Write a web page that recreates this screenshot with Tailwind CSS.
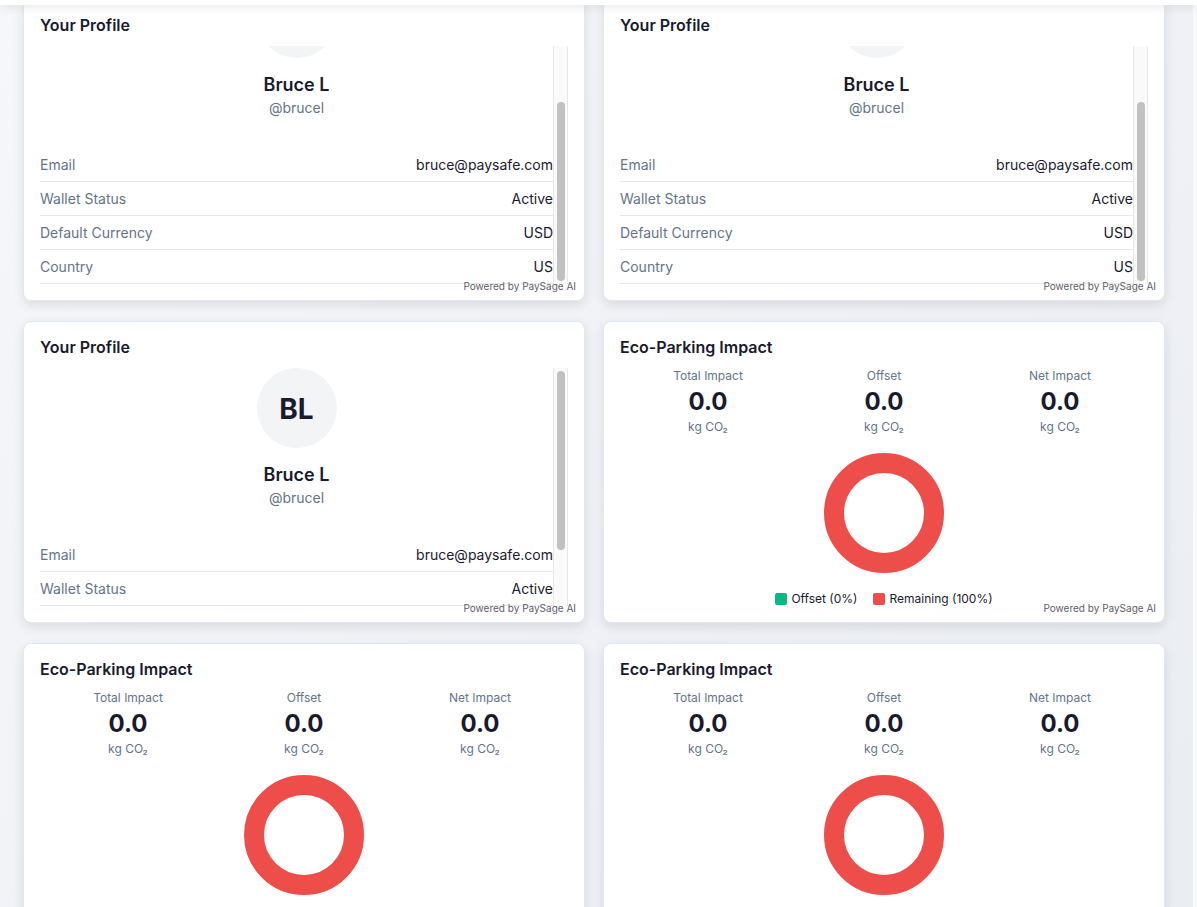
<!DOCTYPE html>
<html lang="en">
<head>
<meta charset="utf-8">
<meta name="viewport" content="width=device-width, initial-scale=1">
<title>Dashboard</title>
<script src="https://cdn.jsdelivr.net/npm/@tailwindcss/browser@4"></script>
</head>
<body class="flex h-screen flex-col overflow-hidden bg-[#f8fafc] font-['Inter',sans-serif] text-[#1a1a2e]">
<header class="z-10 h-[5px] shrink-0 bg-white shadow-[0_2px_10px_rgba(0,0,0,0.12)]"></header>
<main class="mr-1 min-h-0 flex-1 overflow-hidden bg-linear-135 from-[#f6f7fb] to-[#eaedf2] pr-7 pl-[23px]">
  <div id="grid" class="-mt-1.5 grid grid-cols-2 gap-x-[18px] gap-y-5"></div>
</main>

<template id="profile">
  <section class="relative flex h-[302px] flex-col rounded-lg border border-[#e2e8f0] bg-white p-4 shadow-[0_4px_12px_rgba(0,0,0,0.1)]">
    <h2 class="mb-3 text-base leading-[18px] font-semibold">Your Profile</h2>
    <div class="flex min-h-0 flex-1">
      <div data-view class="flex min-w-0 flex-1 flex-col overflow-hidden">
        <div class="flex shrink-0 flex-col items-center pb-[30px]">
          <div class="flex size-20 items-center justify-center rounded-full bg-[#f3f4f6] pt-0.5 text-[28px] font-bold">BL</div>
          <h3 class="mt-3.5 text-lg leading-[26px] font-semibold">Bruce L</h3>
          <p class="text-sm leading-5 text-[#64748b]">@brucel</p>
        </div>
        <dl class="shrink-0 text-sm leading-5">
          <div class="flex h-[34px] items-center justify-between border-b border-[#e5e7eb]"><dt class="text-[#64748b]">Email</dt><dd>bruce@paysafe.com</dd></div>
          <div class="flex h-[34px] items-center justify-between border-b border-[#e5e7eb]"><dt class="text-[#64748b]">Wallet Status</dt><dd>Active</dd></div>
          <div class="flex h-[34px] items-center justify-between border-b border-[#e5e7eb]"><dt class="text-[#64748b]">Default Currency</dt><dd>USD</dd></div>
          <div class="flex h-[34px] items-center justify-between border-b border-[#e5e7eb]"><dt class="text-[#64748b]">Country</dt><dd>US</dd></div>
        </dl>
      </div>
      <div data-track class="flex w-[15px] shrink-0 flex-col border-x border-[#e8e8e8] bg-[#fafafa] px-[3px] py-[3px]">
        <div class="h-[179px] w-2 rounded-full bg-[#c1c1c1]"></div>
      </div>
    </div>
    <p class="absolute right-2 bottom-2 text-[10px] leading-3 text-[#606068]">Powered by PaySage AI</p>
  </section>
</template>

<template id="eco">
  <section class="relative flex h-[302px] flex-col rounded-lg border border-[#e2e8f0] bg-white p-4 shadow-[0_4px_12px_rgba(0,0,0,0.1)]">
    <h2 class="mb-3 text-base leading-[18px] font-semibold">Eco-Parking Impact</h2>
    <div class="grid grid-cols-3 text-center text-xs leading-4 text-[#64748b]">
      <div><p>Total Impact</p><p class="mt-1 mb-[3px] text-2xl leading-7 font-bold text-[#1a1a2e]">0.0</p><p>kg CO₂</p></div>
      <div><p>Offset</p><p class="mt-1 mb-[3px] text-2xl leading-7 font-bold text-[#1a1a2e]">0.0</p><p>kg CO₂</p></div>
      <div><p>Net Impact</p><p class="mt-1 mb-[3px] text-2xl leading-7 font-bold text-[#1a1a2e]">0.0</p><p>kg CO₂</p></div>
    </div>
    <svg class="mx-auto mt-[18px] size-[120px] shrink-0" viewBox="0 0 120 120" role="img" aria-label="Remaining 100%"><circle cx="60" cy="60" r="50" fill="none" stroke="#ee4e4a" stroke-width="20"/></svg>
    <div class="mt-[18px] flex justify-center gap-4 text-xs leading-4">
      <span class="flex items-center gap-1"><i class="size-3 rounded-xs bg-[#0bb883]"></i>Offset (0%)</span>
      <span class="flex items-center gap-1"><i class="size-3 rounded-xs bg-[#ee4e4a]"></i>Remaining (100%)</span>
    </div>
    <p class="absolute right-2 bottom-2 text-[10px] leading-3 text-[#606068]">Powered by PaySage AI</p>
  </section>
</template>

<script>
  const grid = document.getElementById('grid');
  // The second value marks a profile whose details are scrolled to the end.
  const cards = [['profile', true], ['profile', true], ['profile', false], ['eco'], ['eco'], ['eco']];
  for (const [kind, atEnd] of cards) {
    const card = document.getElementById(kind).content.cloneNode(true);
    if (atEnd) {
      card.querySelector('[data-view]').classList.add('justify-end');
      card.querySelector('[data-track]').classList.add('justify-end');
    }
    grid.append(card);
  }
</script>
</body>
</html>
